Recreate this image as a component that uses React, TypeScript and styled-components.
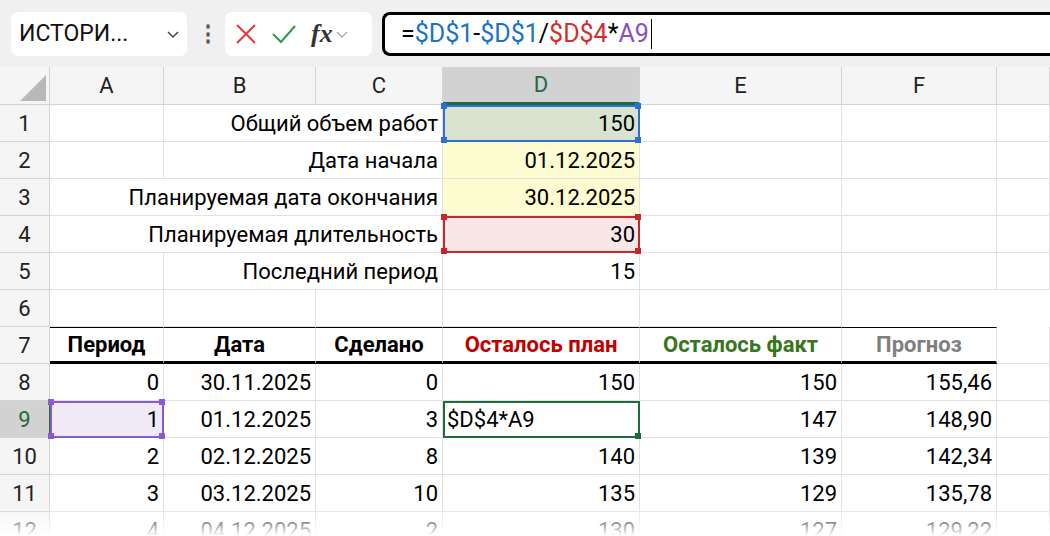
import styled, { createGlobalStyle, css } from 'styled-components';

const Global = createGlobalStyle`
  body { margin: 0; background: #fff; font-family: Roboto, "Liberation Sans", sans-serif; overflow: hidden; }
`;

const COLS = '50px 114px 152px 127px 197px 202px 155px 1fr';

const Page = styled.div`
  width: 1050px;
  height: 536px;
  overflow: hidden;
  position: relative;
`;

const Toolbar = styled.div`
  height: 67px;
  background: #f0f0f0;
  display: flex;
  align-items: center;
  padding: 0 0 0 11px;
  gap: 10px;
  box-sizing: border-box;
`;

const NameBox = styled.div`
  width: 176px;
  height: 44px;
  background: #fff;
  border-radius: 7px;
  display: flex;
  align-items: center;
  justify-content: space-between;
  padding: 0 6px 0 8px;
  box-sizing: border-box;
  font-size: 23px;
  color: #111;
`;

const Dots = styled.div`
  width: 18px;
  text-align: center;
  font-size: 22px;
  color: #555;
  font-weight: bold;
`;

const IconBox = styled.div`
  width: 147px;
  height: 44px;
  background: #fff;
  border-radius: 7px;
  display: flex;
  align-items: center;
  gap: 14px;
  padding: 0 4px 0 10px;
  box-sizing: border-box;
`;

const Fx = styled.span`
  font-family: "Liberation Serif", serif;
  font-style: italic;
  font-weight: bold;
  font-size: 26px;
  color: #333;
  margin-right: -12px;
`;

const FormulaBar = styled.div`
  flex: 1;
  height: 44px;
  background: #fff;
  border: 3px solid #000;
  border-right: none;
  border-radius: 8px 0 0 8px;
  display: flex;
  align-items: center;
  padding-left: 16px;
  font-size: 25px;
  box-sizing: border-box;
`;

const Ref = styled.span<{ $c: string }>`
  color: ${(p) => p.$c};
`;

const Caret = styled.span`
  display: inline-block;
  width: 1px;
  height: 30px;
  background: #000;
  margin-left: 2px;
`;

const Row = styled.div<{ $h?: number; $head?: boolean }>`
  display: grid;
  grid-template-columns: ${COLS};
  height: ${(p) => p.$h ?? 37}px;
  ${(p) => p.$head && css`background: #f5f5f5;`}
`;

const RowHead = styled.div<{ $sel?: boolean }>`
  background: ${(p) => (p.$sel ? '#d2d2d2' : '#f5f5f5')};
  color: ${(p) => (p.$sel ? '#1e6b3c' : '#222')};
  border-right: 1px solid ${(p) => (p.$sel ? '#1e6b3c' : '#d4d4d4')};
  border-bottom: 1px solid #d4d4d4;
  display: flex;
  align-items: center;
  justify-content: center;
  font-size: 22px;
`;

const Corner = styled.div`
  border-right: 1px solid #d4d4d4;
  border-bottom: 1px solid #d4d4d4;
  position: relative;
  &::after {
    content: '';
    position: absolute;
    right: 3px;
    bottom: 3px;
    border-left: 26px solid transparent;
    border-bottom: 26px solid #b8b8b8;
  }
`;

const ColHead = styled.div<{ $sel?: boolean }>`
  display: flex;
  align-items: center;
  justify-content: center;
  font-size: 22px;
  border-right: 1px solid #d4d4d4;
  border-bottom: ${(p) => (p.$sel ? '3px solid #1e6b3c' : '1px solid #d4d4d4')};
  background: ${(p) => (p.$sel ? '#d2d2d2' : '#f5f5f5')};
  color: ${(p) => (p.$sel ? '#1e6b3c' : '#222')};
`;

type CellProps = {
  $align?: 'left' | 'right' | 'center';
  $bg?: string;
  $bold?: boolean;
  $color?: string;
  $box?: string;
  $top?: boolean;
  $thick?: boolean;
  $span?: number;
};

const Cell = styled.div<CellProps>`
  position: relative;
  display: flex;
  align-items: center;
  justify-content: ${(p) => (p.$align === 'left' ? 'flex-start' : p.$align === 'center' ? 'center' : 'flex-end')};
  padding: 0 4px;
  font-size: 22px;
  font-weight: ${(p) => (p.$bold ? 700 : 400)};
  color: ${(p) => p.$color ?? '#000'};
  background: ${(p) => p.$bg ?? '#fff'};
  border-right: 1px solid #e1e1e1;
  border-bottom: ${(p) => (p.$thick ? '3px solid #000' : '1px solid #e1e1e1')};
  border-top: ${(p) => (p.$top ? '1px solid #000' : 'none')};
  white-space: nowrap;
  ${(p) => p.$span && css`grid-column: span ${p.$span};`}
  ${(p) =>
    p.$box &&
    css`
      outline: 2px solid ${p.$box};
      outline-offset: -2px;
      z-index: 1;
    `}
`;

const Handle = styled.span<{ $c: string; $pos: string }>`
  position: absolute;
  width: 6px;
  height: 6px;
  background: ${(p) => p.$c};
  ${(p) => p.$pos}
`;

const Fade = styled.div`
  position: absolute;
  left: 0;
  right: 0;
  bottom: 0;
  height: 30px;
  background: linear-gradient(rgba(255,255,255,0), #fff);
  pointer-events: none;
  z-index: 2;
`;

const corners = (c: string) => (
  <>
    <Handle $c={c} $pos="left:-2px;top:-2px;" />
    <Handle $c={c} $pos="right:-2px;top:-2px;" />
    <Handle $c={c} $pos="left:-2px;bottom:-2px;" />
    <Handle $c={c} $pos="right:-2px;bottom:-2px;" />
  </>
);

const top = [
  { b: 'Общий объем работ', d: '150', bg: '#d8e4cf', box: '#2f6fd1', span: 2 },
  { b: 'Дата начала', d: '01.12.2025', bg: '#fdfbd0', span: 2 },
  { b: 'Планируемая дата окончания', d: '30.12.2025', bg: '#fdfbd0', span: 3 },
  { b: 'Планируемая длительность', d: '30', bg: '#f9e7e7', box: '#c62828', span: 3 },
  { b: 'Последний период', d: '15', span: 2 },
  { b: '', d: '', span: 1 },
];

const data = [
  ['0', '30.11.2025', '0', '150', '150', '155,46'],
  ['1', '01.12.2025', '3', '', '147', '148,90'],
  ['2', '02.12.2025', '8', '140', '139', '142,34'],
  ['3', '03.12.2025', '10', '135', '129', '135,78'],
  ['4', '04.12.2025', '2', '130', '127', '129,22'],
];

export default function App() {
  return (
    <Page>
      <Global />
      <Toolbar>
        <NameBox>
          ИСТОРИ...
          <svg width="16" height="16" viewBox="0 0 16 16"><path d="M3 6l5 5 5-5" stroke="#444" strokeWidth="1.5" fill="none" /></svg>
        </NameBox>
        <Dots>⋮</Dots>
        <IconBox>
          <svg width="22" height="22" viewBox="0 0 22 22"><path d="M2 2l18 18M20 2L2 20" stroke="#e23a3a" strokeWidth="2" /></svg>
          <svg width="26" height="22" viewBox="0 0 26 22"><path d="M2 11l8 8L24 3" stroke="#2e9a4a" strokeWidth="2" fill="none" /></svg>
          <Fx>fx</Fx>
          <svg width="14" height="14" viewBox="0 0 14 14"><path d="M2 5l5 5 5-5" stroke="#aaa" strokeWidth="1.3" fill="none" /></svg>
        </IconBox>
        <FormulaBar>
          =<Ref $c="#1a73c8">$D$1</Ref>-<Ref $c="#1a73c8">$D$1</Ref>/<Ref $c="#d32f2f">$D$4</Ref>*<Ref $c="#8a4fc2">A9</Ref>
          <Caret />
        </FormulaBar>
      </Toolbar>
      <Row $h={38} $head>
        <Corner />
        {['A', 'B', 'C', 'D', 'E', 'F', ''].map((c) => (
          <ColHead key={c} $sel={c === 'D'}>{c}</ColHead>
        ))}
      </Row>
      {top.map((r, i) => (
        <Row key={i}>
          <RowHead>{i + 1}</RowHead>
          {r.span === 2 && <Cell />}
          <Cell $span={r.span}>{r.b}</Cell>
          <Cell $bg={r.bg} $box={r.box}>
            {r.d}
            {r.box && corners(r.box)}
          </Cell>
          <Cell />
          <Cell />
          <Cell />
        </Row>
      ))}
      <Row>
        <RowHead>7</RowHead>
        <Cell $align="center" $bold $top $thick>Период</Cell>
        <Cell $align="center" $bold $top $thick>Дата</Cell>
        <Cell $align="center" $bold $top $thick>Сделано</Cell>
        <Cell $align="center" $bold $top $thick $color="#c00000">Осталось план</Cell>
        <Cell $align="center" $bold $top $thick $color="#38761d">Осталось факт</Cell>
        <Cell $align="center" $bold $top $thick $color="#7f7f7f">Прогноз</Cell>
        <Cell />
      </Row>
      {data.map((r, i) => {
        const sel = i === 1;
        return (
          <Row key={i}>
            <RowHead $sel={sel}>{i + 8}</RowHead>
            <Cell $bg={sel ? '#efe9f8' : undefined} $box={sel ? '#8a5cc8' : undefined}>
              {r[0]}
              {sel && corners('#8a5cc8')}
            </Cell>
            <Cell>{r[1]}</Cell>
            <Cell>{r[2]}</Cell>
            {sel ? (
              <Cell $align="left" $box="#1e6b3c">
                $D$4*A9
                <Handle $c="#1e6b3c" $pos="right:-2px;bottom:-2px;" />
              </Cell>
            ) : (
              <Cell>{r[3]}</Cell>
            )}
            <Cell>{r[4]}</Cell>
            <Cell>{r[5]}</Cell>
            <Cell />
          </Row>
        );
      })}
      <Fade />
    </Page>
  );
}
